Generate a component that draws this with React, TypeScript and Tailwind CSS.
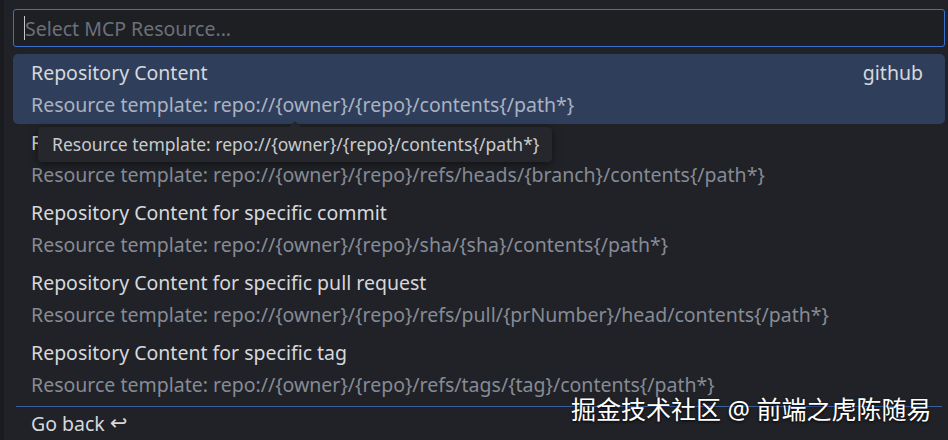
const font = { fontFamily: '"Noto Sans", "Open Sans", sans-serif' };

interface Item {
  title: string;
  template: string;
  source?: string;
}

const items: Item[] = [
  { title: 'Repository Content', template: 'repo://{owner}/{repo}/contents{/path*}', source: 'github' },
  { title: 'Repository Content for specific branch', template: 'repo://{owner}/{repo}/refs/heads/{branch}/contents{/path*}' },
  { title: 'Repository Content for specific commit', template: 'repo://{owner}/{repo}/sha/{sha}/contents{/path*}' },
  { title: 'Repository Content for specific pull request', template: 'repo://{owner}/{repo}/refs/pull/{prNumber}/head/contents{/path*}' },
  { title: 'Repository Content for specific tag', template: 'repo://{owner}/{repo}/refs/tags/{tag}/contents{/path*}' },
];

function Row({ item, active }: { item: Item; active: boolean }) {
  return (
    <div
      className={
        active
          ? 'flex h-[70px] flex-col justify-center rounded-[5px] bg-[#2f3f5b] pl-[18px] pr-[22px]'
          : 'flex h-[70px] flex-col justify-center pl-[18px] pr-[22px]'
      }
    >
      <div className="flex items-center justify-between text-[19.5px] leading-[28px] text-[#d6d8dc]">
        <span>{item.title}</span>
        {item.source && <span>{item.source}</span>}
      </div>
      <div
        className={
          active
            ? 'mt-[4px] text-[19.5px] leading-[28px] text-[#a9b2c2]'
            : 'mt-[4px] text-[19.5px] leading-[28px] text-[#868b95]'
        }
      >
        Resource template: {item.template}
      </div>
    </div>
  );
}

export default function App() {
  return (
    <div className="relative flex h-[440px] w-[948px] overflow-hidden bg-[#202227]" style={font}>
      <div className="w-[4px] bg-[#1a1b1f]" />
      <div className="flex flex-1 flex-col pl-[9px] pr-[3px] pt-[9px]">
        <div className="flex h-[40px] items-center rounded-[3px] border border-[#3d6fd0] bg-[#1d1f23] pl-[10px]">
          <span className="h-[24px] w-px bg-[#c8c8c8]" />
          <span className="text-[19.5px] text-[#6c707b]">Select MCP Resource...</span>
        </div>
        <div className="mt-[7px] flex flex-col">
          {items.map((it, i) => (
            <Row key={it.title} item={it} active={i === 0} />
          ))}
        </div>
        <div className="mx-[3px] mt-[2px] h-px bg-[#3a5f9f]" />
        <div className="flex h-[34px] items-center pl-[18px] text-[19.5px] text-[#d6d8dc]">
          Go back <span className="ml-[5px] font-['DejaVu_Sans'] text-[21px] leading-none">↩</span>
        </div>
      </div>

      <div className="absolute left-[38px] top-[127px] flex h-[35px] items-center rounded-[4px] bg-[#25272c] pl-[14px] pr-[13px] text-[17.5px] text-[#c9cbcf] shadow-[0_2px_8px_rgba(0,0,0,0.5)]">
        <div className="absolute left-[251px] top-[-6px] h-0 w-0 border-x-[6px] border-b-[6px] border-x-transparent border-b-[#25272c]" />
        Resource template: repo://{'{owner}'}/{'{repo}'}/contents{'{/path*}'}
      </div>

      <div
        className="absolute left-[571px] top-[391px] text-[25px] leading-[36px] text-white [text-shadow:0_1px_3px_rgba(0,0,0,0.9)]"
        style={{ fontFamily: '"Noto Sans", "Noto Sans CJK SC", sans-serif' }}
      >
        掘金技术社区 @ 前端之虎陈随易
      </div>
    </div>
  );
}
